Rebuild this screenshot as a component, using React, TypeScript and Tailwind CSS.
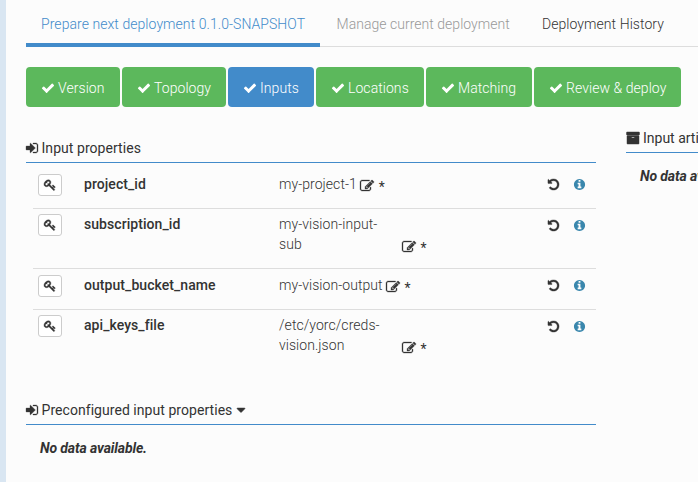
const ICONS = {
  check:
    'M1671 566q0 40-28 68l-724 724-136 136q-28 28-68 28t-68-28l-136-136-362-362q-28-28-28-68t28-68l136-136q28-28 68-28t68 28l294 295 656-657q28-28 68-28t68 28l136 136q28 28 28 68z',
  edit: 'M888 1184l116-116-152-152-116 116v56h96v96h56zm440-720q-16-16-33 1l-350 350q-17 17-1 33t33-1l350-350q17-17 1-33zm80 594v190q0 119-84.5 203.5t-203.5 84.5h-832q-119 0-203.5-84.5t-84.5-203.5v-832q0-119 84.5-203.5t203.5-84.5h832q63 0 117 25 15 7 18 23 3 17-9 29l-49 49q-14 14-32 8-23-6-45-6h-832q-66 0-113 47t-47 113v832q0 66 47 113t113 47h832q66 0 113-47t47-113v-126q0-13 9-22l64-64q15-15 35-7t20 29zm-96-738l288 288-672 672h-288v-288zm444 132l-92 92-288-288 92-92q28-28 68-28t68 28l152 152q28 28 28 68t-28 68z',
  undo: 'M1664 896q0 156-61 298t-164 245-245 164-298 61q-172 0-327-72.5t-264-204.5q-7-10-6.5-22.5t8.5-20.5l137-138q10-9 25-9 16 2 23 12 73 95 179 147t225 52q104 0 198.5-40.5t163.5-109.5 109.5-163.5 40.5-198.5-40.5-198.5-109.5-163.5-163.5-109.5-198.5-40.5q-98 0-188 35.5t-160 101.5l137 138q31 30 14 69-17 40-59 40h-448q-26 0-45-19t-19-45v-448q0-42 40-59 39-17 69 14l130 129q107-101 244.5-156.5t284.5-55.5q156 0 298 61t245 164 164 245 61 298z',
  info: 'M1152 1376v-160q0-14-9-23t-23-9h-96v-512q0-14-9-23t-23-9h-320q-14 0-23 9t-9 23v160q0 14 9 23t23 9h96v320h-96q-14 0-23 9t-9 23v160q0 14 9 23t23 9h448q14 0 23-9t9-23zm-128-896v-160q0-14-9-23t-23-9h-192q-14 0-23 9t-9 23v160q0 14 9 23t23 9h192q14 0 23-9t9-23zm640 416q0 209-103 385.5t-279.5 279.5-385.5 103-385.5-103-279.5-279.5-103-385.5 103-385.5 279.5-279.5 385.5-103 385.5 103 279.5 279.5 103 385.5z',
  signIn:
    'M1312 896q0 26-19 45l-544 544q-19 19-45 19t-45-19-19-45v-288h-448q-26 0-45-19t-19-45v-384q0-26 19-45t45-19h448v-288q0-26 19-45t45-19 45 19l544 544q19 19 19 45zm352-352v704q0 119-84.5 203.5t-203.5 84.5h-320q-13 0-22.5-9.5t-9.5-22.5q0-4-1-20t-.5-26.5 3-23.5 10-19.5 20.5-6.5h320q66 0 113-47t47-113v-704q0-66-47-113t-113-47h-312l-11.5-1-11.5-3-8-5.5-7-9-2-13.5q0-4-1-20t-.5-26.5 3-23.5 10-19.5 20.5-6.5h320q119 0 203.5 84.5t84.5 203.5z',
  archive:
    'M1088 832q0-26-19-45t-45-19h-256q-26 0-45 19t-19 45 19 45 45 19h256q26 0 45-19t19-45zm576-192v960q0 26-19 45t-45 19h-1408q-26 0-45-19t-19-45v-960q0-26 19-45t45-19h1408q26 0 45 19t19 45zm64-448v256q0 26-19 45t-45 19h-1536q-26 0-45-19t-19-45v-256q0-26 19-45t45-19h1536q26 0 45 19t19 45z',
  key: 'M832 512q0-80-56-136t-136-56-136 56-56 136q0 42 19 83-41-19-83-19-80 0-136 56t-56 136 56 136 136 56 136-56 56-136q0-42-19-83 41 19 83 19 80 0 136-56t56-136zm851 704q0 17-49 66t-66 49q-9 0-28.5-16t-36.5-33-38.5-40-24.5-26l-96 96 220 220q28 28 28 68 0 42-39 81t-81 39q-40 0-68-28l-671-671q-176 131-365 131-163 0-265.5-102.5t-102.5-265.5q0-160 95-313t248-248 313-95q163 0 265.5 102.5t102.5 265.5q0 189-131 365l355 355 96-96q-3-3-26-24.5t-40-38.5-33-36.5-16-28.5q0-17 49-66t66-49q13 0 23 10 6 6 46 44.5t82 79.5 86.5 86 73 78 28.5 41z',
  caret: 'M1408 704q0 26-19 45l-448 448q-19 19-45 19t-45-19l-448-448q-19-19-19-45t19-45 45-19h896q26 0 45 19t19 45z',
};

function Icon({ name, className = 'size-3.5' }: { name: keyof typeof ICONS; className?: string }) {
  return (
    <svg
      viewBox="0 0 1792 1792"
      fill="currentColor"
      className={`shrink-0 overflow-visible ${className}`}
      aria-hidden="true"
    >
      <path d={ICONS[name]} />
    </svg>
  );
}

const STEPS = [
  { label: 'Version', style: 'w-[94px] bg-[#5cb85c]' },
  { label: 'Topology', style: 'w-[104px] bg-[#5cb85c]' },
  { label: 'Inputs', style: 'w-[86px] bg-[#428bca]' },
  { label: 'Locations', style: 'w-[108px] bg-[#5cb85c]' },
  { label: 'Matching', style: 'w-[106px] bg-[#5cb85c]' },
  { label: 'Review & deploy', style: 'w-[147px] bg-[#5cb85c]' },
];

const ROWS = [
  { name: 'project_id', lines: ['my-project-1'], height: 'h-[45px] pt-[11px]' },
  { name: 'subscription_id', lines: ['my-vision-input-', 'sub'], height: 'h-[60px] border-t pt-[5px]' },
  { name: 'output_bucket_name', lines: ['my-vision-output'], height: 'h-[41px] border-t pt-[6px]' },
  { name: 'api_keys_file', lines: ['/etc/yorc/creds-', 'vision.json'], height: 'h-[60px] border-t pt-[5px]' },
];

function PropertyRow({ name, lines, height }: (typeof ROWS)[number]) {
  const wrapped = lines.length > 1;
  const actionOffset = wrapped ? 'mt-[5px]' : 'mt-1';
  return (
    <div className={`ml-[7px] flex items-start border-[#ddd] pl-[5px] ${height}`}>
      <button className="flex h-[22px] w-6 items-center justify-center rounded-[3px] border border-[#ccc] bg-white">
        <Icon name="key" className="size-3 stroke-current stroke-[60]" />
      </button>
      <div className="ml-[22px] w-[195px] leading-5 font-medium tracking-[0.06px]">{name}</div>
      <div className="flex w-[268px] items-start leading-5 font-light tracking-[0.05px]">
        <div className={wrapped ? 'w-[123px]' : 'mr-[3.5px]'}>
          {lines.map((line) => (
            <div key={line}>{line}</div>
          ))}
        </div>
        <div className={`flex items-start ${wrapped ? 'pt-[21px]' : ''}`}>
          <Icon name="edit" className="mt-[5px] size-3.5 stroke-current stroke-[40]" />
          <span className="mt-[3px] ml-[4.5px] h-[17px] font-normal">*</span>
        </div>
      </div>
      <Icon name="undo" className={`size-[13px] stroke-current stroke-[50] ${actionOffset}`} />
      <Icon name="info" className={`ml-[13px] size-[13px] text-[#3a87ad] ${actionOffset}`} />
    </div>
  );
}

export default function App() {
  return (
    <div className="flex h-[482px] w-[698px] overflow-hidden bg-[#fcfcfc] font-['Roboto',sans-serif] text-sm text-[#333]">
      <div className="w-1.5 shrink-0 bg-[#d9e6f2]" />
      <div className="ml-5 w-[672px] shrink-0">
        <nav className="flex h-[47px] items-start border-b border-[#ddd] leading-5 font-light whitespace-nowrap">
          <div className="h-[47px] w-[294px] shrink-0 border-b-4 border-[#428bca] pt-3.5 pl-[15px] tracking-[0.06px] text-[#428bca]">
            Prepare next deployment 0.1.0-SNAPSHOT
          </div>
          <div className="w-[206px] shrink-0 pt-3.5 pl-[16.5px] tracking-[0.03px] text-[#999]">
            Manage current deployment
          </div>
          <div className="pt-3.5 pl-4 tracking-[0.06px]">Deployment History</div>
        </nav>

        <div className="mt-5 flex gap-0.5">
          {STEPS.map(({ label, style }) => (
            <button
              key={label}
              className={`flex h-10 shrink-0 items-center gap-[3px] rounded pt-0.5 pl-[15px] leading-5 font-light tracking-[0.06px] whitespace-nowrap text-white ${style}`}
            >
              <Icon name="check" />
              <span>{label}</span>
            </button>
          ))}
        </div>

        <div className="flex">
          <main className="w-[570px] shrink-0">
            <h2 className="mt-[31px] flex h-[25px] items-start gap-0.5 border-b border-[#428bca] leading-5">
              <Icon name="signIn" className="mt-[3px] -ml-px size-3.5 stroke-current stroke-[40]" />
              <span className="ml-[0.5px] tracking-[0.05px]">Input properties</span>
            </h2>
            <div>
              {ROWS.map((row) => (
                <PropertyRow key={row.name} {...row} />
              ))}
            </div>
            <h2 className="mt-[31px] flex h-[25px] items-start gap-0.5 border-b border-[#428bca] leading-5">
              <Icon name="signIn" className="mt-[3px] -ml-px size-3.5 stroke-current stroke-[40]" />
              <span className="ml-[0.5px] tracking-[0.05px]">Preconfigured input properties</span>
              <Icon name="caret" className="mt-[3px] size-3.5 stroke-current stroke-[60]" />
            </h2>
            <p className="mt-[13px] pl-3.5 leading-5 font-bold tracking-[-0.12px] italic">No data available.</p>
          </main>
          <aside className="ml-[30px] w-[72px] shrink-0 overflow-hidden whitespace-nowrap">
            <h2 className="mt-[21px] flex h-[25px] items-start gap-[3px] border-b border-[#428bca] leading-5">
              <Icon name="archive" className="mt-[3px] size-3.5 stroke-current stroke-[60]" />
              Input artifacts
            </h2>
            <p className="mt-[13px] pl-3.5 leading-5 font-bold tracking-[-0.12px] italic">No data available.</p>
          </aside>
        </div>
      </div>
    </div>
  );
}
